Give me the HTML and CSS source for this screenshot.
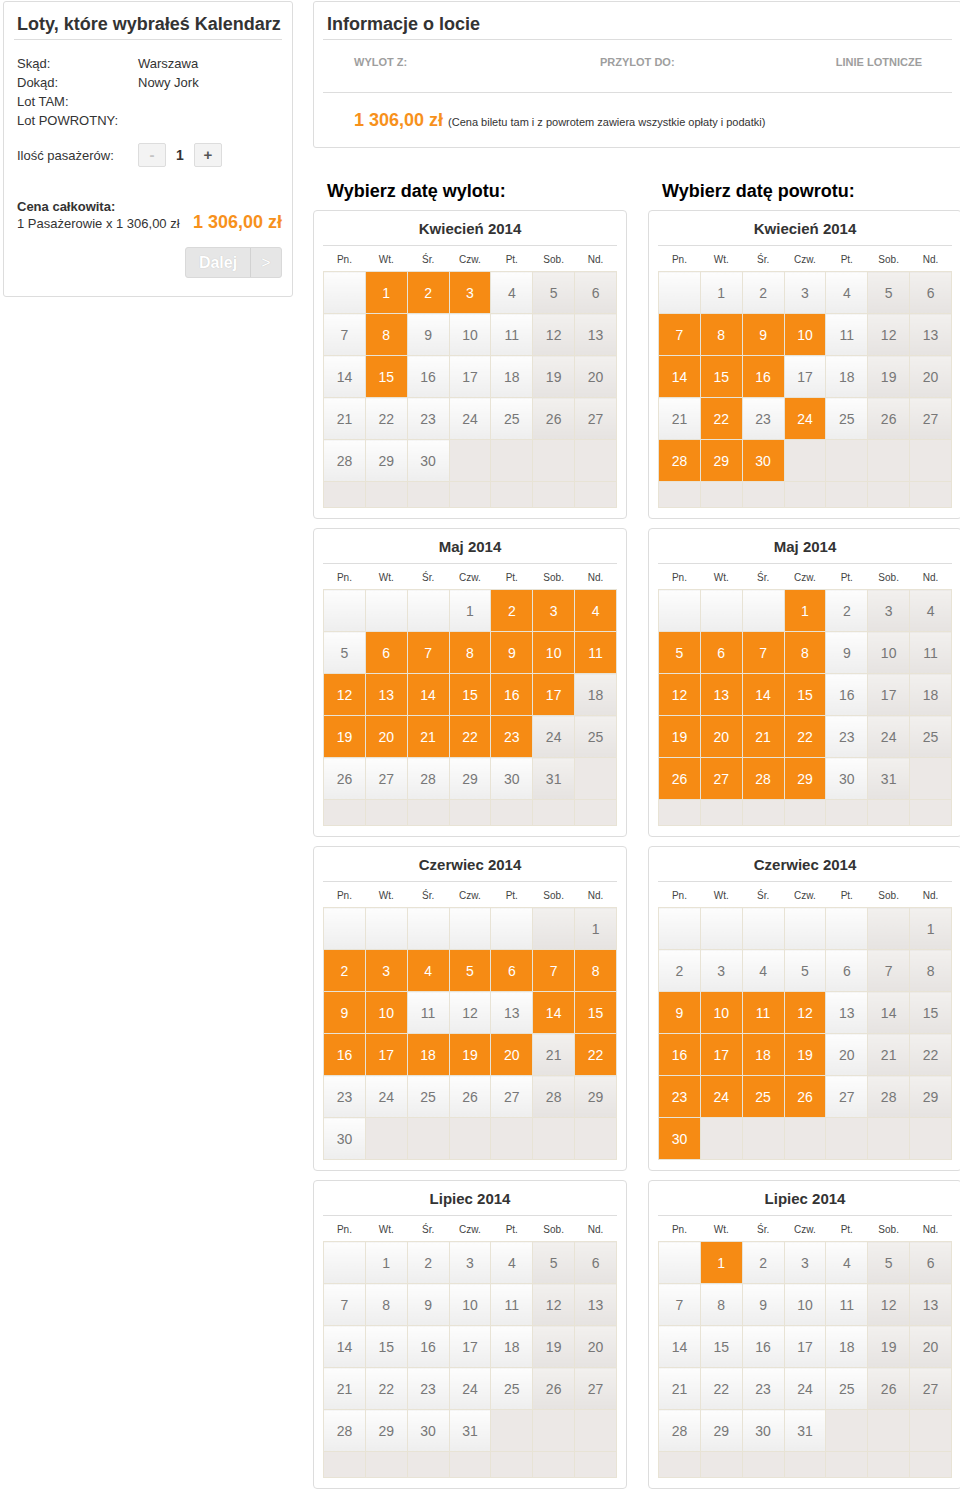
FILE: index.html
```html
<!DOCTYPE html>
<html lang="pl">

<head>
    <meta charset="UTF-8">
    <meta name="viewport" content="width=device-width, initial-scale=1.0">
    <title>Kalendarz lotów</title>
    <link rel="stylesheet" href="styles.css">
</head>

<body>

    <div class="page">
        <aside class="panel summary">
            <h2 class="panel-title">Loty, które wybrałeś Kalendarz</h2>

            <dl class="route">
                <dt>Skąd:</dt>
                <dd>Warszawa</dd>
                <dt>Dokąd:</dt>
                <dd>Nowy Jork</dd>
                <dt>Lot TAM:</dt>
                <dd></dd>
                <dt>Lot POWROTNY:</dt>
                <dd></dd>
            </dl>

            <div class="passengers">
                <span class="passengers-label">Ilość pasażerów:</span>
                <button class="qty-btn minus">-</button>
                <span class="qty-value">1</span>
                <button class="qty-btn plus">+</button>
            </div>

            <div class="total">
                <div class="total-label">Cena całkowita:</div>
                <div class="total-line">
                    <span>1 Pasażerowie x 1 306,00 zł</span>
                    <span class="total-price">1 306,00 zł</span>
                </div>
            </div>

            <div class="actions">
                <button class="next-btn">
                    <span class="next-label">Dalej</span>
                    <span class="next-arrow">&gt;</span>
                </button>
            </div>
        </aside>

        <main class="content">
            <section class="panel flight-info">
                <h2 class="panel-title">Informacje o locie</h2>
                <div class="flight-head">
                    <span>Wylot z:</span>
                    <span>Przylot do:</span>
                    <span>Linie lotnicze</span>
                </div>
                <div class="flight-price">
                    <strong>1 306,00 zł</strong>
                    <small>(Cena biletu tam i z powrotem zawiera wszystkie opłaty i podatki)</small>
                </div>
            </section>

            <div class="pickers">
                <div class="picker" id="departure">
                    <h3>Wybierz datę wylotu:</h3>
                </div>
                <div class="picker" id="return">
                    <h3>Wybierz datę powrotu:</h3>
                </div>
            </div>
        </main>
    </div>

    <script>
        const dayNames = ["Pn.", "Wt.", "Śr.", "Czw.", "Pt.", "Sob.", "Nd."];

        const months = [
            { title: "Kwiecień 2014", month: 3 },
            { title: "Maj 2014", month: 4 },
            { title: "Czerwiec 2014", month: 5 },
            { title: "Lipiec 2014", month: 6 }
        ];

        // dni z dostępnymi lotami (klucz = numer miesiąca od 0)
        const departureDays = {
            3: [1, 2, 3, 8, 15],
            4: [2, 3, 4, 6, 7, 8, 9, 10, 11, 12, 13, 14, 15, 16, 17, 19, 20, 21, 22, 23],
            5: [2, 3, 4, 5, 6, 7, 8, 9, 10, 14, 15, 16, 17, 18, 19, 20, 22],
            6: []
        };

        const returnDays = {
            3: [7, 8, 9, 10, 14, 15, 16, 22, 24, 28, 29, 30],
            4: [1, 5, 6, 7, 8, 12, 13, 14, 15, 19, 20, 21, 22, 26, 27, 28, 29],
            5: [9, 10, 11, 12, 16, 17, 18, 19, 23, 24, 25, 26, 30],
            6: [1]
        };

        function buildCalendar(title, month, picked) {
            const year = 2014;
            const first = (new Date(year, month, 1).getDay() + 6) % 7;
            const days = new Date(year, month + 1, 0).getDate();

            let html = `<div class="cal-box"><div class="cal-title">${title}</div>`;
            html += `<table class="cal-grid"><thead><tr>`;
            html += dayNames.map(name => `<th>${name}</th>`).join("");
            html += `</tr></thead><tbody>`;

            for (let row = 0; row < 6; row++) {
                html += "<tr>";
                for (let col = 0; col < 7; col++) {
                    const day = row * 7 + col - first + 1;
                    let cls = col >= 5 ? "weekend" : "weekday";
                    let text = "";

                    if (day > days) {
                        cls = "off";
                    } else if (day >= 1) {
                        text = day;
                        if (picked.includes(day)) cls = "picked";
                    }
                    html += `<td class="${cls}">${text}</td>`;
                }
                html += "</tr>";
            }

            html += "</tbody></table></div>";
            return html;
        }

        function renderPicker(id, selection) {
            const picker = document.getElementById(id);
            months.forEach(m => {
                picker.insertAdjacentHTML("beforeend", buildCalendar(m.title, m.month, selection[m.month]));
            });
        }

        renderPicker("departure", departureDays);
        renderPicker("return", returnDays);
    </script>

</body>

</html>
```

FILE: styles.css
```css
/* Ogólne */
body {
    margin: 0;
    font-family: "Liberation Sans", Arial, sans-serif;
    font-size: 13px;
    color: #333;
    background-color: #fff;
    overflow: hidden;
}

.page {
    display: flex;
    align-items: flex-start;
    gap: 20px;
    width: 962px;
    padding: 1px 0 0 3px;
}

.panel {
    border: 1px solid #ddd;
    border-radius: 3px;
    background-color: #fff;
    box-sizing: border-box;
}

.panel-title {
    margin: 0;
    padding: 11px 0 4px 3px;
    font-size: 18px;
    line-height: 22px;
    font-weight: bold;
    white-space: nowrap;
    color: #333;
    border-bottom: 1px solid #ddd;
}

/* Podsumowanie po lewej */
.summary {
    flex-shrink: 0;
    width: 290px;
    padding: 0 10px 18px;
}

.route {
    display: grid;
    grid-template-columns: 121px 1fr;
    margin: 14px 0 0;
    padding-left: 3px;
    line-height: 19px;
}

.route dd {
    margin: 0;
}

.passengers {
    display: flex;
    align-items: center;
    margin-top: 13px;
    padding-left: 3px;
    line-height: 19px;
}

.passengers-label {
    width: 121px;
}

.qty-btn {
    width: 28px;
    height: 24px;
    padding: 0;
    box-sizing: border-box;
    border: 1px solid #ddd;
    border-radius: 2px;
    background-color: #f3f3f3;
    font-family: inherit;
    font-size: 15px;
    font-weight: bold;
    line-height: 20px;
    color: #c4c4c4;
}

.qty-btn.plus {
    color: #555;
}

.qty-value {
    width: 28px;
    text-align: center;
    font-size: 14px;
    font-weight: bold;
}

.total {
    margin-top: 31px;
    padding-left: 3px;
    line-height: 17px;
}

.total-label {
    font-weight: bold;
}

.total-line {
    display: flex;
    justify-content: space-between;
    align-items: baseline;
}

.total-price {
    font-size: 18px;
    line-height: 12px;
    font-weight: bold;
    color: #f7911c;
}

.actions {
    display: flex;
    justify-content: flex-end;
    margin-top: 15px;
}

.next-btn {
    display: flex;
    height: 31px;
    padding: 0;
    box-sizing: border-box;
    border: 1px solid #d9d9d9;
    border-radius: 3px;
    background-color: #e6e6e6;
    font-family: inherit;
    color: #fff;
    text-shadow: 0 0 1px rgba(0, 0, 0, 0.2);
}

.next-label {
    width: 64px;
    font-size: 16px;
    font-weight: bold;
    line-height: 29px;
    border-right: 1px solid #d2d2d2;
}

.next-arrow {
    width: 30px;
    font-size: 16px;
    line-height: 29px;
}

/* Informacje o locie */
.content {
    flex-shrink: 0;
    width: 649px;
}

.flight-info {
    padding: 0 9px;
}

.flight-info .panel-title {
    padding-left: 4px;
}

.flight-head {
    display: grid;
    grid-template-columns: 246px 1fr auto;
    padding: 16px 30px 23px 31px;
    border-bottom: 1px solid #ddd;
    font-size: 11px;
    line-height: 13px;
    font-weight: bold;
    text-transform: uppercase;
    color: #9e9e9e;
}

.flight-price {
    padding: 16px 0 16px 31px;
    font-size: 18px;
    line-height: 22px;
}

.flight-price strong {
    color: #f7911c;
}

.flight-price small {
    font-size: 11px;
    line-height: 13px;
    color: #333;
}

/* Kalendarze */
.pickers {
    display: grid;
    grid-template-columns: 314px 314px;
    column-gap: 21px;
    margin-top: 33px;
}

.picker {
    display: flex;
    flex-direction: column;
    gap: 9px;
}

.picker h3 {
    margin: 0;
    padding-left: 14px;
    font-size: 18px;
    line-height: 20px;
    color: #000;
}

.cal-box {
    padding: 0 9px 10px;
    border: 1px solid #ddd;
    border-radius: 4px;
    background-color: #fff;
}

.cal-title {
    padding: 9px 0 7px;
    font-size: 15px;
    line-height: 18px;
    font-weight: bold;
    text-align: center;
    color: #333;
    border-bottom: 1px solid #ddd;
}

.cal-grid {
    width: 100%;
    border-collapse: collapse;
    table-layout: fixed;
}

.cal-grid th {
    padding: 8px 0 5px;
    font-size: 10px;
    line-height: 12px;
    font-weight: normal;
    color: #444;
}

.cal-grid td {
    padding: 13px 0 12px;
    border: 1px solid #e8e3d5;
    text-align: center;
    font-size: 14px;
    line-height: 16px;
    color: #777;
}

.cal-grid td.weekday {
    background: linear-gradient(#fdfdfd, #eeeeee);
}

.cal-grid td.weekend {
    background: linear-gradient(#f2f0ee, #e6e3e1);
}

.cal-grid td.off {
    background-color: #ece8e6;
}

.cal-grid td.picked {
    background: #f68b14;
    color: #fff;
}
```
